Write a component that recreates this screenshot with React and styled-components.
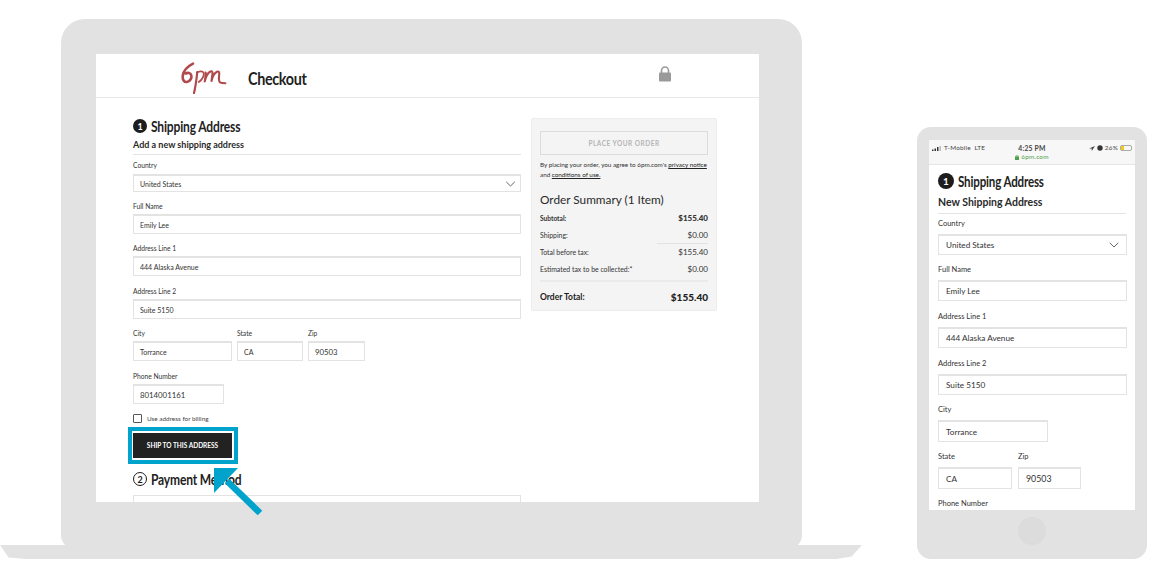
import React from "react";
import styled, { createGlobalStyle } from "styled-components";

const Global = createGlobalStyle`
  html, body { margin: 0; padding: 0; background: #fff; }
  body { font-family: "Lato", "Liberation Sans", sans-serif; color: #222; overflow: hidden; }
  * { box-sizing: border-box; }
`;

const Stage = styled.div`
  position: relative;
  width: 1150px;
  height: 578px;
  padding-top: 19px;
  display: flex;
  align-items: flex-start;
`;

const Laptop = styled.div`
  width: 862px;
  display: flex;
  flex-direction: column;
`;
const LaptopBody = styled.div`
  margin-left: 61px;
  width: 741px;
  height: 530px;
  background: #e2e2e2;
  border-radius: 24px 24px 14px 14px;
  padding: 35px 43px 0 35px;
`;
const LaptopBase = styled.div`
  margin-top: -4px;
  height: 14px;
  background: #e2e2e2;
  clip-path: polygon(0 0, 100% 0, 98.8% 82%, 97% 100%, 3% 100%, 1% 90%);
`;
const LaptopScreen = styled.div`
  width: 663px;
  height: 448px;
  background: #fff;
  overflow: hidden;
`;
const Header = styled.header`
  height: 44px;
  border-bottom: 1px solid #e8e8e8;
  display: flex;
  align-items: center;
  padding-left: 83px;
  padding-right: 87px;
`;
const Logo = styled.svg`
  width: 50px;
  height: 34px;
  flex: none;
  margin-top: 2px;
`;
const PageTitle = styled.h1`
  margin: 0 0 0 19px;
  font-size: 16.5px;
  font-weight: 700;
  letter-spacing: -0.4px;
  color: #222;
  flex: 1;
  transform: scaleX(0.87);
  transform-origin: left;
  padding-top: 7px;
`;
const LockIcon = styled.svg`
  width: 14px;
  height: 16px;
  flex: none;
  margin-top: -3px;
`;
const Columns = styled.div`
  display: flex;
  padding: 19px 0 0 37px;
  gap: 10px;
`;
const FormColumn = styled.div`
  width: 388px;
  flex: none;
`;
const StepHeading = styled.div`
  display: flex;
  align-items: center;
  gap: 4px;
  height: ${p => (p.$mobile ? 20 : 18)}px;
  color: #222;
`;
const StepText = styled.span`
  display: inline-block;
  font-size: ${p => (p.$mobile ? 15 : 14.5)}px;
  font-weight: 700;
  letter-spacing: -0.2px;
  white-space: nowrap;
  transform: scaleX(${p => (p.$mobile ? 0.77 : 0.83)});
  transform-origin: left;
`;
const StepBadge = styled.span`
  width: ${p => (p.$mobile ? 16 : 14)}px;
  height: ${p => (p.$mobile ? 16 : 14)}px;
  border-radius: 50%;
  flex: none;
  display: flex;
  align-items: center;
  justify-content: center;
  font-size: ${p => (p.$mobile ? 10 : 9)}px;
  font-weight: 700;
  background: ${p => (p.$outline ? "#fff" : "#1d1d1d")};
  color: ${p => (p.$outline ? "#1d1d1d" : "#fff")};
  border: ${p => (p.$outline ? "1px solid #1d1d1d" : "none")};
`;
const SubHeading = styled.div`
  font-size: ${p => (p.$mobile ? 10.5 : 9)}px;
  font-weight: 700;
  line-height: ${p => (p.$mobile ? 14 : 12)}px;
  margin-top: 4px;
  padding-bottom: ${p => (p.$mobile ? 4 : 3)}px;
  border-bottom: 1px solid #e4e4e4;
  color: #2a2a2a;
`;
const Label = styled.div`
  font-size: ${p => (p.$mobile ? 7.5 : 6.7)}px;
  line-height: 10px;
  color: #333;
  margin-top: ${p => p.$top}px;
  margin-bottom: ${p => p.$bottom}px;
  white-space: nowrap;
`;
const Field = styled.div`
  width: ${p => p.$w}px;
  height: ${p => p.$h}px;
  border: 1px solid #e3e3e3;
  border-top-width: 2px;
  background: #fff;
  display: flex;
  align-items: center;
  justify-content: space-between;
  padding: 0 ${p => (p.$mobile ? 7 : 6)}px;
  font-size: ${p => (p.$wide ? (p.$mobile ? 8.8 : 7.8) : p.$mobile ? 8.2 : 7)}px;
  color: #333;
  white-space: nowrap;
`;
const Chevron = styled.svg`
  width: ${p => (p.$mobile ? 10 : 11)}px;
  height: 6px;
  margin-right: ${p => (p.$mobile ? 0 : -2)}px;
`;
const FieldRow = styled.div`
  display: flex;
  gap: ${p => p.$gap}px;
`;
const CheckRow = styled.div`
  display: flex;
  align-items: center;
  gap: 5px;
  margin-top: 10px;
  height: 9px;
  font-size: 6.4px;
  color: #444;
`;
const CheckBox = styled.span`
  width: 9px;
  height: 9px;
  border: 1px solid #555;
  border-radius: 1px;
`;
const ShipOutline = styled.div`
  margin: 4px 0 0 -5px;
  width: 110px;
  height: 37px;
  border: 4px solid #00a3cc;
  padding: 2px 2px 2px 1px;
  background: #fff;
`;
const ShipButton = styled.div`
  width: 100%;
  height: 100%;
  background: #222;
  color: #fff;
  display: flex;
  align-items: center;
  justify-content: center;
  font-size: 6.5px;
  font-weight: 700;
`;
const PaymentHeading = styled(StepHeading)`
  margin-top: 6px;
`;
const PaymentBox = styled.div`
  margin-top: 7px;
  height: 20px;
  border: 1px solid #e3e3e3;
`;
const Summary = styled.aside`
  width: 186px;
  height: 193px;
  background: #f4f4f4;
  border: 1px solid #ececec;
  border-radius: 2px;
  padding: 12px 8px 0;
  margin-top: 1px;
`;
const PlaceButton = styled.div`
  height: 24px;
  border: 1px solid #dcdcdc;
  display: flex;
  align-items: center;
  justify-content: center;
  font-size: 6.5px;
  font-weight: 700;
  letter-spacing: 0.5px;
  color: #b4b4b4;
`;
const Legal = styled.p`
  margin: 5px 0 0;
  font-size: 6.3px;
  line-height: 10px;
  color: #333;
  white-space: nowrap;
  a {
    color: #222;
    text-decoration: underline;
  }
`;
const SummaryTitle = styled.div`
  font-size: 11.8px;
  font-weight: 400;
  line-height: 16px;
  margin-top: 12px;
  color: #2a2a2a;
  white-space: nowrap;
`;
const SumRow = styled.div`
  height: 17px;
  display: flex;
  align-items: center;
  justify-content: space-between;
  font-size: ${p => (p.$bold ? 6.6 : 6.9)}px;
  color: #333;
  font-weight: ${p => (p.$bold ? 700 : 400)};
  white-space: nowrap;
  position: relative;
  ${p => p.$rule && `&::before { content: ""; position: absolute; right: 0; top: 0; width: 51px; height: 1px; background: #e2e2e2; }`}
  b, span { font-size: 8px; }
`;
const SumList = styled.div`
  margin-top: 1px;
  padding-bottom: 3px;
  border-bottom: 2px solid #ebebeb;
`;
const TotalRow = styled.div`
  display: flex;
  align-items: center;
  justify-content: space-between;
  margin-top: 8px;
  height: 14px;
  font-size: 8.5px;
  font-weight: 700;
  color: #222;
  strong { font-size: 10px; }
`;

const Phone = styled.div`
  margin-left: 55px;
  margin-top: 108px;
  width: 230px;
  height: 432px;
  background: #e2e2e2;
  border-radius: 14px;
  padding: 13px 12px 0;
  display: flex;
  flex-direction: column;
  align-items: center;
`;
const PhoneScreen = styled.div`
  width: 206px;
  height: 370px;
  background: #fff;
  overflow: hidden;
`;
const StatusBar = styled.div`
  height: 25px;
  background: #f7f7f7;
  border-bottom: 1px solid #e6e6e6;
  padding: 4px 3px 0;
  font-size: 6.4px;
  line-height: 8px;
  letter-spacing: 0.2px;
  color: #444;
  display: grid;
  grid-template-columns: 1fr auto 1fr;
`;
const StatusLeft = styled.div`
  display: flex;
  align-items: center;
  gap: 2px;
  height: 8px;
`;
const StatusCenter = styled.div`
  text-align: center;
  font-weight: 700;
  font-size: 6.8px;
`;
const StatusUrl = styled.div`
  font-weight: 400;
  font-size: 6.4px;
  color: #4f9e4f;
  margin-top: 1px;
  display: flex;
  align-items: center;
  justify-content: center;
  gap: 2px;
`;
const StatusRight = styled.div`
  display: flex;
  align-items: center;
  justify-content: flex-end;
  gap: 2px;
  height: 8px;
`;
const Signal = styled.svg`
  width: 10px;
  height: 5px;
`;
const Battery = styled.span`
  width: 12px;
  height: 6px;
  border: 1px solid #aaa;
  border-radius: 2px;
  display: block;
  &::before {
    content: "";
    display: block;
    width: 3px;
    height: 100%;
    background: #f2c81e;
  }
`;
const PhoneForm = styled.div`
  padding: 6px 9px 0;
`;
const HomeButton = styled.div`
  margin-top: 7px;
  width: 28px;
  height: 28px;
  border-radius: 50%;
  background: #dcdcdc;
`;
const ArrowArt = styled.svg`
  position: absolute;
  left: 205px;
  top: 460px;
  width: 65px;
  height: 60px;
`;

const ChevronIcon = ({ mobile }) => (
  <Chevron $mobile={mobile} viewBox="0 0 10 6">
    <path d="M.7.8 5 5l4.3-4.2" fill="none" stroke="#555" strokeWidth="0.9" />
  </Chevron>
);

const Step = ({ n, mobile, outline, children, as: As = StepHeading }) => (
  <As $mobile={mobile}>
    <StepBadge $mobile={mobile} $outline={outline}>{n}</StepBadge>
    <StepText $mobile={mobile}>{children}</StepText>
  </As>
);

const desktopFields = [
  { label: "Full Name", value: "Emily Lee", top: 9 },
  { label: "Address Line 1", value: "444 Alaska Avenue", top: 9 },
  { label: "Address Line 2", value: "Suite 5150", top: 10 },
];
const mobileFields = [
  { label: "Full Name", value: "Emily Lee", top: 10 },
  { label: "Address Line 1", value: "444 Alaska Avenue", top: 11 },
  { label: "Address Line 2", value: "Suite 5150", top: 11 },
];

export default function App() {
  return (
    <Stage>
      <Global />
      <Laptop>
        <LaptopBody>
          <LaptopScreen>
            <Header>
              <Logo viewBox="0 0 50 34">
                <g fill="none" stroke="#b04a4c" strokeLinecap="round" strokeLinejoin="round">
                  <path d="M14 3.7C8.500 6.500 4.300 11 3.700 16c-.5 4 1.600 6.300 4.300 6 3-.4 5-4 4.300-6.700-.6-2.300-3.500-3-5.600-1.800" strokeWidth="2.600" />
                  <path d="M18.300 12C17.500 19 16.800 26 15 33" strokeWidth="2.200" />
                  <path d="M18 12.500c2-1.300 5.500-2 6.600.2 1 2.300-1.200 7.300-4.800 9.300" strokeWidth="1.800" />
                  <path d="M26.700 12.500c.2 3-.3 6-1 9 .8-3.500 3-8.500 5.700-10 2-.9 2.300 1 2 3l-.9 6.500c.7-3.500 2.900-8 5.500-9.300 2-.9 2.500 1 2.200 3-.4 3-.7 6.500.8 7.600 1.300.9 3.600.9 5.400.9" strokeWidth="2.100" />
                </g>
              </Logo>
              <PageTitle>Checkout</PageTitle>
              <LockIcon viewBox="0 0 14 16">
                <path d="M3.500 7V4.500a3.500 3.500 0 0 1 7 0V7" fill="none" stroke="#9a9a9a" strokeWidth="1.600" />
                <rect x="1" y="6.500" width="12" height="9" rx="1" fill="#9a9a9a" />
              </LockIcon>
            </Header>
            <Columns>
              <FormColumn>
                <Step n="1">Shipping Address</Step>
                <SubHeading>Add a new shipping address</SubHeading>
                <Label $top={5} $bottom={4}>Country</Label>
                <Field $w={388} $h={18}>United States<ChevronIcon /></Field>
                {desktopFields.map(f => (
                  <div key={f.label}>
                    <Label $top={f.top} $bottom={3}>{f.label}</Label>
                    <Field $w={388} $h={20}>{f.value}</Field>
                  </div>
                ))}
                <FieldRow $gap={5}>
                  <div>
                    <Label $top={9} $bottom={3}>City</Label>
                    <Field $w={99} $h={20}>Torrance</Field>
                  </div>
                  <div>
                    <Label $top={9} $bottom={3}>State</Label>
                    <Field $w={66} $h={20}>CA</Field>
                  </div>
                  <div>
                    <Label $top={9} $bottom={3}>Zip</Label>
                    <Field $w={57} $h={20} $wide>90503</Field>
                  </div>
                </FieldRow>
                <Label $top={10} $bottom={3}>Phone Number</Label>
                <Field $w={91} $h={20} $wide>8014001161</Field>
                <CheckRow>
                  <CheckBox />
                  Use address for billing
                </CheckRow>
                <ShipOutline>
                  <ShipButton>SHIP TO THIS ADDRESS</ShipButton>
                </ShipOutline>
                <Step n="2" outline as={PaymentHeading}>Payment Method</Step>
                <PaymentBox />
              </FormColumn>
              <Summary>
                <PlaceButton>PLACE YOUR ORDER</PlaceButton>
                <Legal>
                  By placing your order, you agree to 6pm.com's <a>privacy notice</a>
                  <br />
                  and <a>conditions of use.</a>
                </Legal>
                <SummaryTitle>Order Summary (1 Item)</SummaryTitle>
                <SumList>
                  <SumRow $bold>Subtotal:<b>$155.40</b></SumRow>
                  <SumRow>Shipping:<span>$0.00</span></SumRow>
                  <SumRow $rule>Total before tax:<span>$155.40</span></SumRow>
                  <SumRow>Estimated tax to be collected:*<span>$0.00</span></SumRow>
                </SumList>
                <TotalRow>Order Total:<strong>$155.40</strong></TotalRow>
              </Summary>
            </Columns>
          </LaptopScreen>
        </LaptopBody>
        <LaptopBase />
      </Laptop>
      <Phone>
        <PhoneScreen>
          <StatusBar>
            <StatusLeft>
              <Signal viewBox="0 0 10 5">
                <path d="M0 3.500h1.500V5H0zM2.500 2.500H4V5H2.500zM5 1h1.500v4H5z" fill="#333" />
                <path d="M7.500 0H9v5H7.500z" fill="#bbb" />
              </Signal>
              T-Mobile&nbsp;&nbsp;LTE
            </StatusLeft>
            <StatusCenter>
              4:25 PM
              <StatusUrl>
                <svg width="4" height="5" viewBox="0 0 4 5"><rect y="1.500" width="4" height="3.500" fill="#4f9e4f" /><path d="M1 2V1a1 1 0 0 1 2 0v1" fill="none" stroke="#4f9e4f" strokeWidth=".6" /></svg>
                6pm.com
              </StatusUrl>
            </StatusCenter>
            <StatusRight>
              <svg width="6" height="5" viewBox="0 0 6 5"><path d="M6 0 0 2.500h2.700V5z" fill="#444" /></svg>
              <svg width="6" height="6" viewBox="0 0 6 6"><circle cx="3" cy="3" r="2.700" fill="#333" /></svg>
              26%
              <Battery />
            </StatusRight>
          </StatusBar>
          <PhoneForm>
            <Step n="1" mobile>Shipping Address</Step>
            <SubHeading $mobile>New Shipping Address</SubHeading>
            <Label $mobile $top={5} $bottom={5}>Country</Label>
            <Field $mobile $w={189} $h={21}>United States<ChevronIcon mobile /></Field>
            {mobileFields.map(f => (
              <div key={f.label}>
                <Label $mobile $top={f.top} $bottom={5}>{f.label}</Label>
                <Field $mobile $w={189} $h={21}>{f.value}</Field>
              </div>
            ))}
            <Label $mobile $top={10} $bottom={5}>City</Label>
            <Field $mobile $w={110} $h={22}>Torrance</Field>
            <FieldRow $gap={6}>
              <div>
                <Label $mobile $top={10} $bottom={5}>State</Label>
                <Field $mobile $w={74} $h={22}>CA</Field>
              </div>
              <div>
                <Label $mobile $top={10} $bottom={5}>Zip</Label>
                <Field $mobile $w={63} $h={22} $wide>90503</Field>
              </div>
            </FieldRow>
            <Label $mobile $top={10} $bottom={5}>Phone Number</Label>
          </PhoneForm>
        </PhoneScreen>
        <HomeButton />
      </Phone>
      <ArrowArt viewBox="0 0 65 60">
        <path d="M9 8h24L9 33z" fill="#00a3cc" />
        <path d="M22 21 55 53" stroke="#00a3cc" strokeWidth="6.500" fill="none" />
      </ArrowArt>
    </Stage>
  );
}
